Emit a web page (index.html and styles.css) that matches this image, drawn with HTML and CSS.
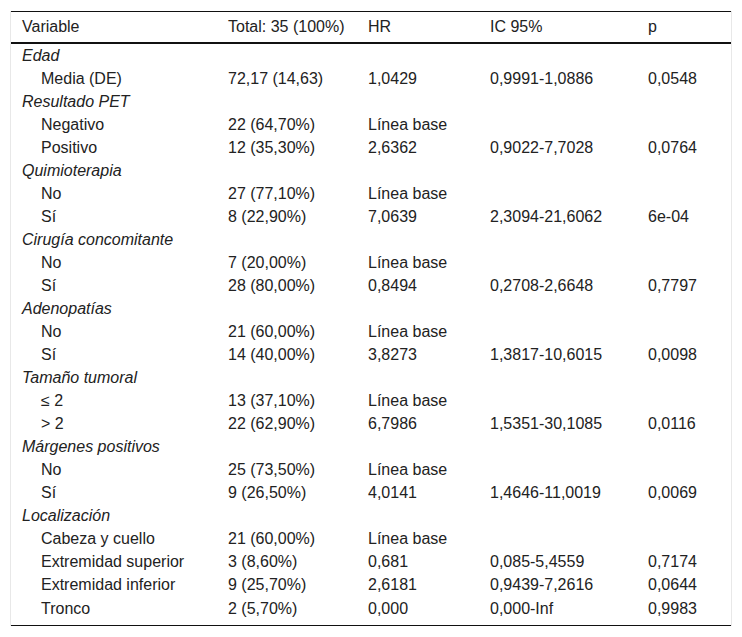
FILE: index.html
```html
<!DOCTYPE html>
<html lang="es">
<head>
<meta charset="utf-8">
<link rel="stylesheet" href="styles.css">
</head>
<body>
<div class="wrap">
<table class="tbl">
<colgroup>
<col class="c1"><col class="c2"><col class="c3"><col class="c4"><col class="c5">
</colgroup>
<thead>
<tr><th>Variable</th><th>Total: 35 (100%)</th><th>HR</th><th>IC 95%</th><th>p</th></tr>
</thead>
<tbody>
<tr class="grp"><td>Edad</td><td></td><td></td><td></td><td></td></tr>
<tr><td class="ind">Media (DE)</td><td>72,17 (14,63)</td><td>1,0429</td><td>0,9991-1,0886</td><td>0,0548</td></tr>
<tr class="grp"><td>Resultado PET</td><td></td><td></td><td></td><td></td></tr>
<tr><td class="ind">Negativo</td><td>22 (64,70%)</td><td>Línea base</td><td></td><td></td></tr>
<tr><td class="ind">Positivo</td><td>12 (35,30%)</td><td>2,6362</td><td>0,9022-7,7028</td><td>0,0764</td></tr>
<tr class="grp"><td>Quimioterapia</td><td></td><td></td><td></td><td></td></tr>
<tr><td class="ind">No</td><td>27 (77,10%)</td><td>Línea base</td><td></td><td></td></tr>
<tr><td class="ind">Sí</td><td>8 (22,90%)</td><td>7,0639</td><td>2,3094-21,6062</td><td>6e-04</td></tr>
<tr class="grp"><td>Cirugía concomitante</td><td></td><td></td><td></td><td></td></tr>
<tr><td class="ind">No</td><td>7 (20,00%)</td><td>Línea base</td><td></td><td></td></tr>
<tr><td class="ind">Sí</td><td>28 (80,00%)</td><td>0,8494</td><td>0,2708-2,6648</td><td>0,7797</td></tr>
<tr class="grp"><td>Adenopatías</td><td></td><td></td><td></td><td></td></tr>
<tr><td class="ind">No</td><td>21 (60,00%)</td><td>Línea base</td><td></td><td></td></tr>
<tr><td class="ind">Sí</td><td>14 (40,00%)</td><td>3,8273</td><td>1,3817-10,6015</td><td>0,0098</td></tr>
<tr class="grp"><td>Tamaño tumoral</td><td></td><td></td><td></td><td></td></tr>
<tr><td class="ind">≤ 2</td><td>13 (37,10%)</td><td>Línea base</td><td></td><td></td></tr>
<tr><td class="ind">&gt; 2</td><td>22 (62,90%)</td><td>6,7986</td><td>1,5351-30,1085</td><td>0,0116</td></tr>
<tr class="grp"><td>Márgenes positivos</td><td></td><td></td><td></td><td></td></tr>
<tr><td class="ind">No</td><td>25 (73,50%)</td><td>Línea base</td><td></td><td></td></tr>
<tr><td class="ind">Sí</td><td>9 (26,50%)</td><td>4,0141</td><td>1,4646-11,0019</td><td>0,0069</td></tr>
<tr class="grp"><td>Localización</td><td></td><td></td><td></td><td></td></tr>
<tr><td class="ind">Cabeza y cuello</td><td>21 (60,00%)</td><td>Línea base</td><td></td><td></td></tr>
<tr><td class="ind">Extremidad superior</td><td>3 (8,60%)</td><td>0,681</td><td>0,085-5,4559</td><td>0,7174</td></tr>
<tr><td class="ind">Extremidad inferior</td><td>9 (25,70%)</td><td>2,6181</td><td>0,9439-7,2616</td><td>0,0644</td></tr>
<tr class="last"><td class="ind">Tronco</td><td>2 (5,70%)</td><td>0,000</td><td>0,000-Inf</td><td>0,9983</td></tr>
</tbody>
</table>
</div>
</body>
</html>
```

FILE: styles.css
```css
html, body {
  margin: 0;
  padding: 0;
  background: #ffffff;
}
body {
  font-family: "Liberation Sans", Arial, sans-serif;
  font-size: 16px;
  color: #222222;
}
.wrap {
  margin: 11px 0 0 10px;
  width: 722px;
  box-sizing: border-box;
  border-left: 1px solid #e8e8e8;
  border-right: 1px solid #e8e8e8;
}
.tbl {
  width: 720px;
  border-collapse: collapse;
  table-layout: fixed;
  border-top: 1px solid #111111;
  border-bottom: 1px solid #111111;
}
.c1 { width: 206px; }
.c2 { width: 140px; }
.c3 { width: 122px; }
.c4 { width: 158px; }
.c5 { width: 94px; }
th, td {
  text-align: left;
  font-weight: normal;
  padding: 0 0 0 11px;
  height: 23px;
  line-height: 18px;
  white-space: nowrap;
  vertical-align: middle;
}
th {
  height: 30px;
  border-bottom: 2px solid #111111;
}
.grp td:first-child {
  font-style: italic;
}
td.ind {
  padding-left: 30px;
}
tr.last td {
  height: 26px;
  padding-bottom: 3px;
}
```
